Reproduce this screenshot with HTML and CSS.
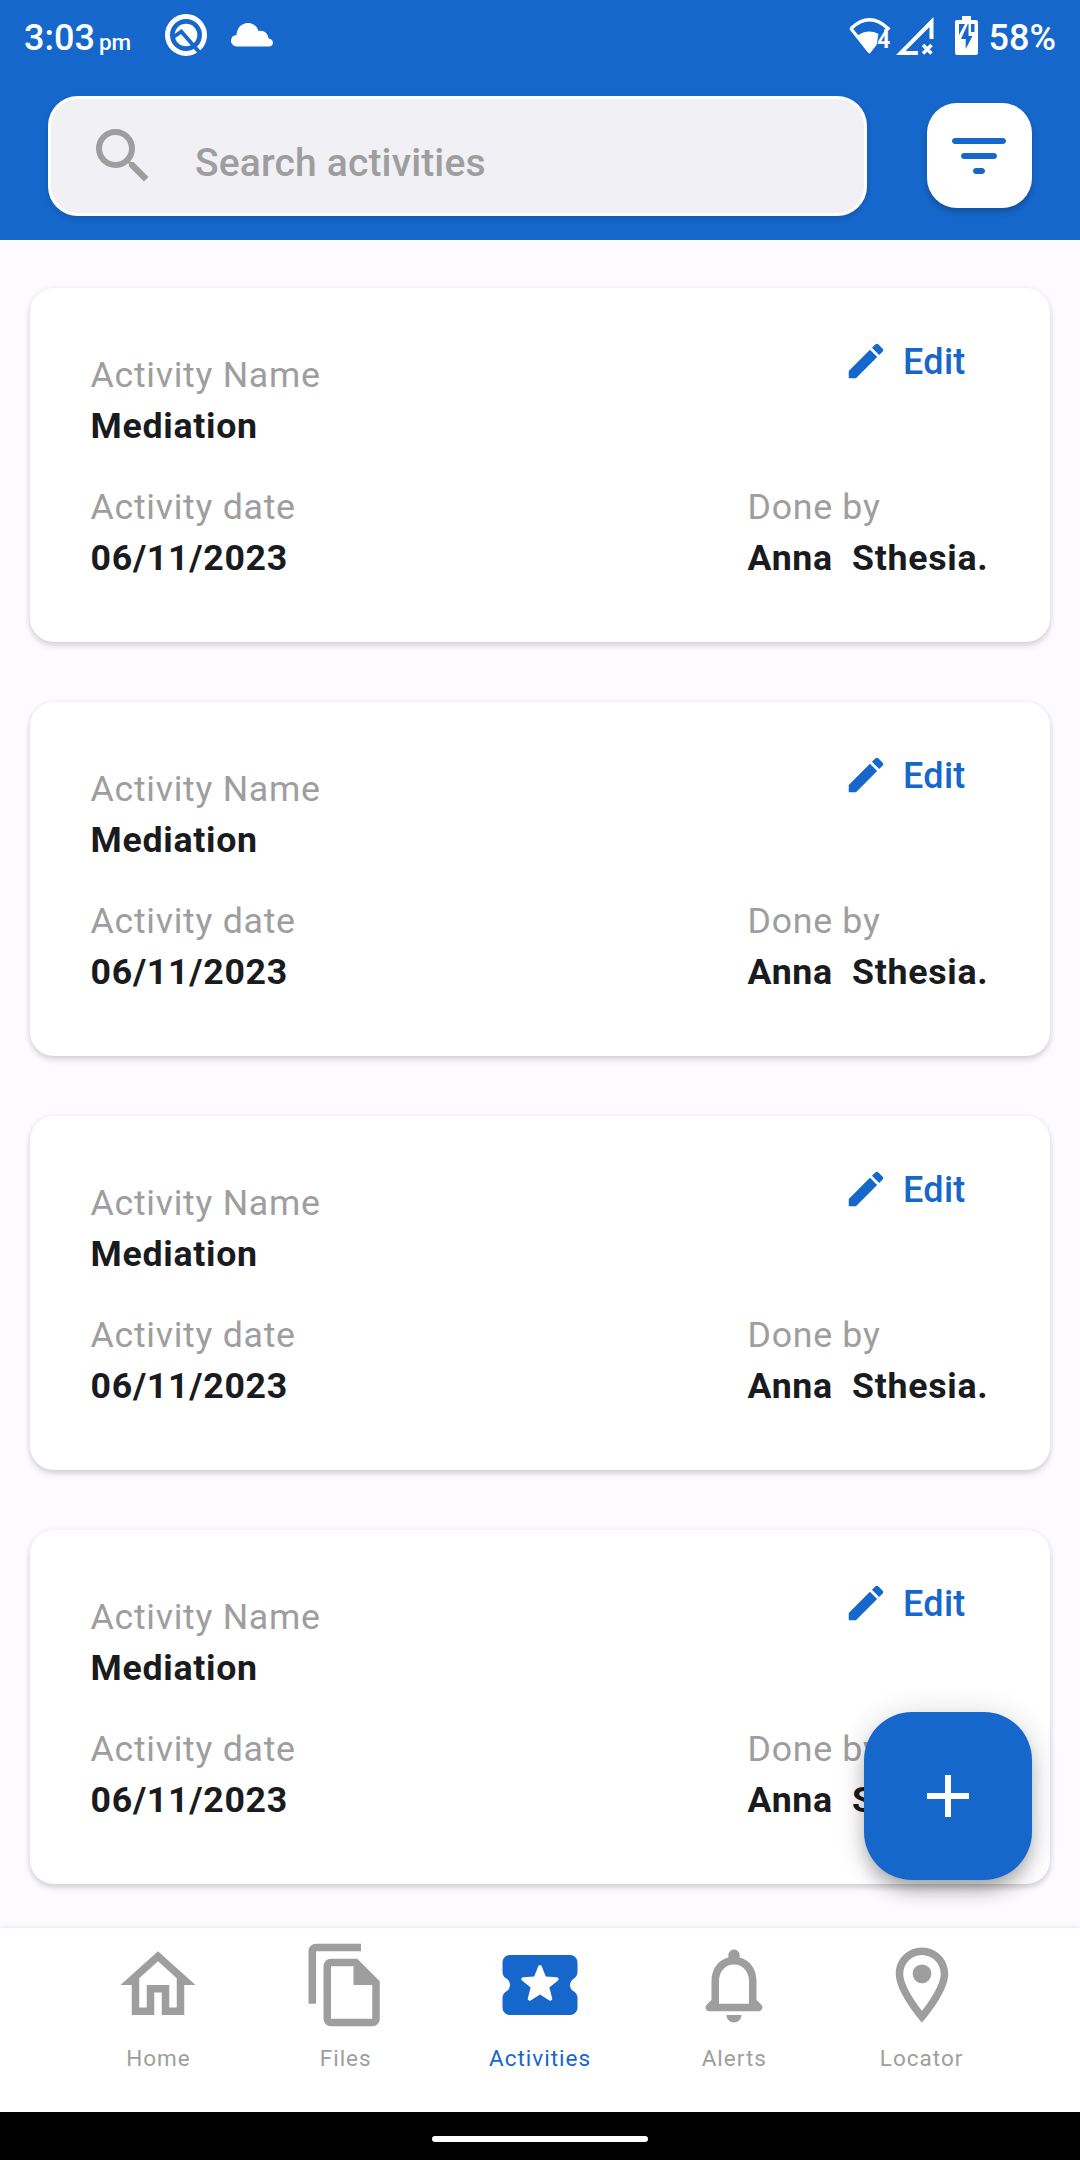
FILE: index.html
```
<!DOCTYPE html>
<html lang="en">
<head>
<meta charset="utf-8">
<title>Activities</title>
<link rel="stylesheet" href="styles.css">
</head>
<body>
<svg class="defs" aria-hidden="true">
  <symbol id="edit" viewBox="0 0 24 24"><path d="M3 17.25V21h3.75L17.81 9.94l-3.75-3.75L3 17.25zM20.71 7.04c.39-.39.39-1.02 0-1.41l-2.34-2.34a.996.996 0 0 0-1.41 0l-1.83 1.83 3.75 3.75 1.83-1.83z"/></symbol>
</svg>
<div class="screen">
  <header class="top">
    <div class="status">
      <span class="time">3:03</span><span class="ampm">pm</span>
      <svg class="q" viewBox="0 0 42 42"><circle cx="21" cy="21" r="18.500" fill="none" stroke="#fff" stroke-width="5"/><circle cx="21" cy="21" r="11.300" fill="#fff"/><path d="M8.500 23L16.300 17.500L35 39" fill="none" stroke="#1567cb" stroke-width="3.800"/></svg>
      <svg class="cloud" viewBox="0 0 42 24"><path d="M5.500 23.500a5.500 5.800 0 0 1 0-11.600C6 5 10.500 0 17 0c5 0 9 3 10.500 8 5-1 9.500 2 10 7.500 3 .5 4.500 2.300 4.500 4.300 0 2.200-1.800 3.700-4 3.700z"/></svg>
      <div class="system">
        <svg class="wifi" viewBox="0 0 42 37"><path d="M2 10.500Q20.500-7 39 10.500L36 13.500" fill="none" stroke="#fff" stroke-width="3.500"/><path d="M1.500 10L20.500 34" stroke="#fff" stroke-width="3.200"/><path d="M8.500 17.500Q19 10.500 29.500 16L27.500 27L20.500 36z"/><text class="gen" x="28" y="30">4</text></svg>
        <svg class="signal" viewBox="0 0 38 38"><path d="M37.500 0V22h-4V10L9.500 34H22v4H0z"/><path d="M27 28l8.500 8.500m0-8.500l-8.500 8.500" stroke="#fff" stroke-width="3.500"/></svg>
        <svg class="battery" viewBox="0 0 23 39"><path fill-rule="evenodd" d="M7 0h9v4h5q2 0 2 2v31q0 2-2 2H2q-2 0-2-2V6q0-2 2-2h5zM4 8v11l6-11zm12 0v8h3.500V8z"/><path d="M12.800 8L6 23h4.700v10L17.500 20h-4V8z" fill="#1567cb"/></svg>
        <span class="percent">58%</span>
      </div>
    </div>
    <div class="searchrow">
      <div class="search">
        <svg class="icon24" viewBox="0 0 24 24"><path d="M15.500 14h-.79l-.28-.27A6.471 6.471 0 0 0 16 9.500 6.500 6.500 0 1 0 9.500 16c1.610 0 3.090-.59 4.230-1.570l.27.28v.79l5 4.990L20.490 19l-4.990-5zm-6 0C7.010 14 5 11.990 5 9.500S7.010 5 9.500 5 14 7.010 14 9.500 11.990 14 9.500 14z"/></svg>
        <span class="placeholder">Search activities</span>
      </div>
      <div class="filter">
        <svg class="icon24" viewBox="0 0 24 24"><path d="M11 18h2c.55 0 1-.45 1-1s-.45-1-1-1h-2c-.55 0-1 .45-1 1s.45 1 1 1zM3 7c0 .55.45 1 1 1h16c.55 0 1-.45 1-1s-.45-1-1-1H4c-.55 0-1 .45-1 1zm4 6h10c.55 0 1-.45 1-1s-.45-1-1-1H7c-.55 0-1 .45-1 1s.45 1 1 1z"/></svg>
      </div>
    </div>
  </header>
  <main class="list">
    <article class="card">
      <div class="col"><span class="label">Activity Name</span><b class="value">Mediation</b><span class="label second">Activity date</span><b class="value">06/11/2023</b></div>
      <div class="col right"><div class="edit"><svg><use href="#edit"/></svg>Edit</div><span class="label">Done by</span><b class="value">Anna  Sthesia.</b></div>
    </article>
    <article class="card">
      <div class="col"><span class="label">Activity Name</span><b class="value">Mediation</b><span class="label second">Activity date</span><b class="value">06/11/2023</b></div>
      <div class="col right"><div class="edit"><svg><use href="#edit"/></svg>Edit</div><span class="label">Done by</span><b class="value">Anna  Sthesia.</b></div>
    </article>
    <article class="card">
      <div class="col"><span class="label">Activity Name</span><b class="value">Mediation</b><span class="label second">Activity date</span><b class="value">06/11/2023</b></div>
      <div class="col right"><div class="edit"><svg><use href="#edit"/></svg>Edit</div><span class="label">Done by</span><b class="value">Anna  Sthesia.</b></div>
    </article>
    <article class="card">
      <div class="col"><span class="label">Activity Name</span><b class="value">Mediation</b><span class="label second">Activity date</span><b class="value">06/11/2023</b></div>
      <div class="col right"><div class="edit"><svg><use href="#edit"/></svg>Edit</div><span class="label">Done by</span><b class="value">Anna  Sthesia.</b></div>
    </article>
    <div class="fab"><svg class="icon24" viewBox="0 0 24 24"><path d="M19 13h-6v6h-2v-6H5v-2h6V5h2v6h6v2z"/></svg></div>
  </main>
  <nav class="tabs">
    <div class="tab"><svg viewBox="0 0 24 24"><path d="M12 5.690l5 4.500V18h-2v-6H9v6H7v-7.810l5-4.500M12 3L2 12h3v8h6v-6h2v6h6v-8h3L12 3z"/></svg>Home</div>
    <div class="tab"><svg viewBox="0 0 24 24"><path d="M16 1H4c-1.100 0-2 .9-2 2v14h2V3h12V1zm-1 4H8c-1.100 0-1.990.9-1.990 2L6 21c0 1.100.89 2 1.990 2H19c1.100 0 2-.9 2-2V11l-6-6zM8 21V7h6v5h5v9H8z"/></svg>Files</div>
    <div class="tab active"><svg viewBox="0 0 24 24"><path fill-rule="evenodd" d="M20 12c0-.76.430-1.420 1.060-1.760.6-.33.940-1.010.940-1.700V6c0-1.100-.9-2-2-2H4c-1.100 0-1.990.89-1.990 2v2.540c0 .69.330 1.370.940 1.690C3.580 10.580 4 11.240 4 12s-.43 1.430-1.060 1.760c-.6.330-.94 1.010-.94 1.700V18c0 1.100.9 2 2 2h16c1.100 0 2-.9 2-2v-2.540c0-.69-.34-1.370-.94-1.700-.63-.34-1.060-1-1.060-1.760zm-5.500 4.100L12 14.500l-2.500 1.610c-.38.240-.87-.11-.75-.55l.75-2.880-2.300-1.880c-.35-.29-.17-.86.290-.89l2.960-.170 1.080-2.750c.170-.42.770-.42.930 0l1.080 2.760 2.960.170c.45.030.640.6.290.89l-2.300 1.880.76 2.860c.12.450-.37.800-.75.550z"/></svg>Activities</div>
    <div class="tab"><svg viewBox="0 0 24 24"><path d="M19.290 17.290L18 16v-5c0-3.070-1.630-5.640-4.500-6.320V4c0-.83-.67-1.500-1.500-1.500s-1.500.67-1.500 1.500v.68C7.640 5.360 6 7.920 6 11v5l-1.290 1.290c-.63.63-.19 1.710.7 1.710h13.170c.9 0 1.340-1.080.71-1.710zM16 17H8v-6c0-2.480 1.510-4.500 4-4.500s4 2.020 4 4.500v6zm-4 5c1.100 0 2-.9 2-2h-4c0 1.100.89 2 2 2z"/></svg>Alerts</div>
    <div class="tab"><svg viewBox="0 0 24 24"><path d="M12 2C8.130 2 5 5.130 5 9c0 5.250 7 13 7 13s7-7.750 7-13c0-3.870-3.130-7-7-7zM7 9c0-2.760 2.240-5 5-5s5 2.240 5 5c0 2.880-2.880 7.190-5 9.880C9.920 16.210 7 11.850 7 9z"/><circle cx="12" cy="9" r="2.500"/></svg>Locator</div>
  </nav>
  <div class="gesture"><div class="pill"></div></div>
</div>
</body>
</html>
```
FILE: styles.css
```
* { box-sizing: border-box; }
body { margin: 0; font-family: Roboto, "Liberation Sans", sans-serif; }
svg { display: block; fill: currentColor; flex: none; }
.defs { display: none; }
.icon24 { width: 72px; height: 72px; }
.screen { width: 1080px; height: 2160px; display: flex; flex-direction: column; background: #fdfbff; overflow: hidden; }

.top { height: 240px; flex: none; background: #1567cb; color: #fff; }
.status { height: 96px; padding: 17px 24px 0 24px; display: flex; align-items: flex-start; font-size: 36px; line-height: 42px; font-weight: 500; }
.ampm { width: 33px; font-size: 22.500px; margin-left: 4px; line-height: 44px; padding-top: 3px; }
.q { width: 42px; height: 42px; margin: -3px 0 0 33px; }
.cloud { width: 42px; height: 24px; margin: 6px 0 0 24px; }
.system { margin-left: auto; display: flex; align-items: flex-start; }
.wifi { width: 42px; height: 37px; margin-top: 1px; overflow: visible; }
.gen { font-size: 23px; font-weight: 700; }
.signal { width: 38px; height: 38px; margin: 0 0 0 5px; }
.battery { width: 23px; height: 39px; margin: -1px 10.500px 0 21px; }

.searchrow { display: flex; align-items: flex-start; padding: 0 48px; justify-content: space-between; }
.search { width: 819px; height: 120px; border: 3px solid #fff; border-radius: 30px; background: #f0f0f5; color: #9e9e9e; display: flex; padding: 21px 36px; box-shadow: 0 3px 6px rgba(0,0,0,.12); }
.placeholder { margin-left: 36px; font-size: 39px; line-height: 46px; padding-top: 20px; font-weight: 500; letter-spacing: .15px; }
.filter { width: 105px; height: 105px; margin-top: 7px; border-radius: 30px; background: #fff; color: #1567cb; padding: 17px 16px; box-shadow: 0 4px 6px rgba(0,0,0,.22); }

.list { position: relative; flex: 1; min-height: 0; padding: 48px 30px 0; display: flex; flex-direction: column; gap: 60px; }
.card { height: 354px; flex: none; background: #fff; border-radius: 24px; padding: 0 60px 0 60.500px; display: flex; justify-content: space-between; box-shadow: 0 4px 6px rgba(0,0,0,.12), 0 1px 6px rgba(0,0,0,.09); font-size: 35.700px; line-height: 51px; }
.col { display: flex; flex-direction: column; padding-top: 62px; letter-spacing: .720px; }
.right { width: 242.500px; padding-top: 48px; white-space: pre; }
.label { color: #9e9e9e; }
.value { color: #1a1b1e; font-weight: 700; }
.second { margin-top: 30px; }
.edit { color: #1567cb; font-size: 36px; font-weight: 500; display: flex; margin: 0 0 95px 95px; letter-spacing: .3px; height: 51px; line-height: 53px; }
.edit svg { width: 46px; height: 46px; margin: 1.500px 14.500px 0 0; }
.fab { position: absolute; right: 48px; bottom: 48px; width: 168px; height: 168px; border-radius: 48px; background: #1567cb; color: #fff; padding: 48px; box-shadow: 0 13px 20px -5px rgba(0,0,0,.32), 0 3px 30px rgba(0,0,0,.16); }

.tabs { height: 184px; flex: none; background: #fff; padding: 12px 0 0; display: flex; justify-content: center; gap: 97.300px; color: #9e9e9e; box-shadow: 0 -1px 4px rgba(0,0,0,.08); z-index: 1; }
.tab { width: 90px; display: flex; flex-direction: column; align-items: center; gap: 14px; font-size: 22.500px; line-height: 28px; letter-spacing: 1px; }
.tab svg { width: 90px; height: 90px; }
.active { width: 104px; color: #1567cb; }
.gesture { height: 48px; flex: none; background: #000; padding-top: 24px; }
.pill { width: 216px; height: 6px; border-radius: 3px; background: #fff; margin: 0 auto; }
```
